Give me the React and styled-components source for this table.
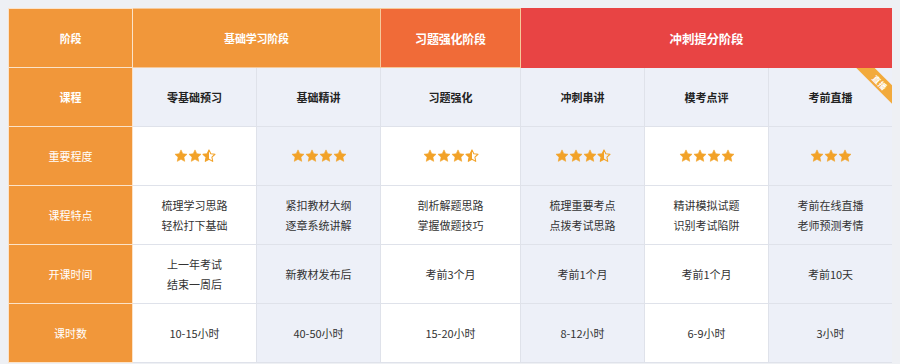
import React from "react";
import styled, { createGlobalStyle } from "styled-components";

const Global = createGlobalStyle`
  html, body { margin: 0; padding: 0; }
  body {
    margin: 8px;
    background: #eef0f4;
    font-family: "Noto Sans CJK SC", "Noto Sans", sans-serif;
  }
`;

const Table = styled.table`
  width: 884px;
  border-collapse: collapse;
  table-layout: fixed;
  background: #fff;
`;

const Col = styled.col`
  width: ${(p) => p.$w}px;
`;

const HeadCell = styled.th`
  height: 58px;
  padding: 0;
  background: ${(p) => p.$bg};
  color: #fff;
  font-size: ${(p) => p.$fs || 11}px;
  font-weight: 700;
  text-align: center;
  vertical-align: middle;
  border: 1px solid ${(p) => p.$line || "#f6c99a"};
  letter-spacing: -0.2px;
`;

const LabelCell = styled.th`
  height: 58px;
  padding: 0;
  background: #f1973a;
  color: #fff;
  font-size: 11px;
  font-weight: ${(p) => (p.$bold ? 700 : 400)};
  text-align: center;
  vertical-align: middle;
  border: 1px solid #fbe3c9;
`;

const Cell = styled.td`
  position: relative;
  overflow: hidden;
  height: 58px;
  padding: 0;
  background: ${(p) => (p.$alt ? "#edf0f8" : "#ffffff")};
  color: ${(p) => (p.$bold ? "#222" : "#333")};
  font-size: 11px;
  font-weight: ${(p) => (p.$bold ? 600 : 400)};
  line-height: 20px;
  text-align: center;
  vertical-align: middle;
  border: 1px solid #dfe2ea;
`;

const Stars = styled.div`
  display: flex;
  justify-content: center;
  gap: 0;
`;

const Ribbon = styled.div`
  position: absolute;
  top: 8px;
  right: -15px;
  width: 54px;
  height: 13px;
  background: #f2aa3c;
  color: #fff;
  font-size: 8px;
  line-height: 13px;
  text-align: center;
  transform: rotate(45deg);
  letter-spacing: 0.5px;
`;

const STAR = "M12 1.5l3.1 6.6 7.2.9-5.3 5 1.4 7.2L12 17.6l-6.4 3.6 1.4-7.2-5.3-5 7.2-.9z";

function Star({ half }) {
  const id = React.useId();
  return (
    <svg width="14" height="14" viewBox="0 0 24 24">
      {half ? (
        <>
          <defs>
            <clipPath id={id}>
              <rect x="0" y="0" width="12" height="24" />
            </clipPath>
          </defs>
          <path d={STAR} fill="none" stroke="#f2a228" strokeWidth="1.8" strokeLinejoin="round" />
          <path d={STAR} fill="#f2a228" clipPath={`url(#${id})`} />
        </>
      ) : (
        <path d={STAR} fill="#f2a228" stroke="#f2a228" strokeWidth="1" strokeLinejoin="round" />
      )}
    </svg>
  );
}

function Rating({ full, half }) {
  return (
    <Stars>
      {Array.from({ length: full }).map((_, i) => (
        <Star key={i} />
      ))}
      {half && <Star half />}
    </Stars>
  );
}

const courses = [
  { name: "零基础预习", stars: [2, true], feat: ["梳理学习思路", "轻松打下基础"], time: ["上一年考试", "结束一周后"], hours: "10-15小时" },
  { name: "基础精讲", stars: [4, false], feat: ["紧扣教材大纲", "逐章系统讲解"], time: ["新教材发布后"], hours: "40-50小时" },
  { name: "习题强化", stars: [3, true], feat: ["剖析解题思路", "掌握做题技巧"], time: ["考前3个月"], hours: "15-20小时" },
  { name: "冲刺串讲", stars: [3, true], feat: ["梳理重要考点", "点拨考试思路"], time: ["考前1个月"], hours: "8-12小时" },
  { name: "模考点评", stars: [4, false], feat: ["精讲模拟试题", "识别考试陷阱"], time: ["考前1个月"], hours: "6-9小时" },
  { name: "考前直播", stars: [3, false], feat: ["考前在线直播", "老师预测考情"], time: ["考前10天"], hours: "3小时", badge: "直播" },
];

const Lines = ({ lines }) => (
  <>
    {lines.map((l, i) => (
      <div key={i}>{l}</div>
    ))}
  </>
);

export default function App() {
  return (
    <>
      <Global />
      <Table>
        <colgroup>
          <Col $w={124} />
          <Col $w={124} />
          <Col $w={124} />
          <Col $w={140} />
          <Col $w={124} />
          <Col $w={124} />
          <Col $w={124} />
        </colgroup>
        <thead>
          <tr>
            <HeadCell $bg="#f1973a" $fs={11} $line="#fbe3c9">阶段</HeadCell>
            <HeadCell $bg="#f1973a" colSpan={2} $fs={11}>基础学习阶段</HeadCell>
            <HeadCell $bg="#f06b38" $fs={12}>习题强化阶段</HeadCell>
            <HeadCell $bg="#e84444" colSpan={3} $fs={12.5} $line="#e84444">冲刺提分阶段</HeadCell>
          </tr>
        </thead>
        <tbody>
          <tr>
            <LabelCell $bold>课程</LabelCell>
            {courses.map((c) => (
              <Cell key={c.name} $alt $bold>
                {c.name}
                {c.badge && <Ribbon>{c.badge}</Ribbon>}
              </Cell>
            ))}
          </tr>
          <tr>
            <LabelCell>重要程度</LabelCell>
            {courses.map((c, i) => (
              <Cell key={c.name} $alt={i % 2 === 1}>
                <Rating full={c.stars[0]} half={c.stars[1]} />
              </Cell>
            ))}
          </tr>
          <tr>
            <LabelCell>课程特点</LabelCell>
            {courses.map((c, i) => (
              <Cell key={c.name} $alt={i % 2 === 1}>
                <Lines lines={c.feat} />
              </Cell>
            ))}
          </tr>
          <tr>
            <LabelCell>开课时间</LabelCell>
            {courses.map((c, i) => (
              <Cell key={c.name} $alt={i % 2 === 1}>
                <Lines lines={c.time} />
              </Cell>
            ))}
          </tr>
          <tr>
            <LabelCell>课时数</LabelCell>
            {courses.map((c, i) => (
              <Cell key={c.name} $alt={i % 2 === 1}>
                {c.hours}
              </Cell>
            ))}
          </tr>
        </tbody>
      </Table>
    </>
  );
}
